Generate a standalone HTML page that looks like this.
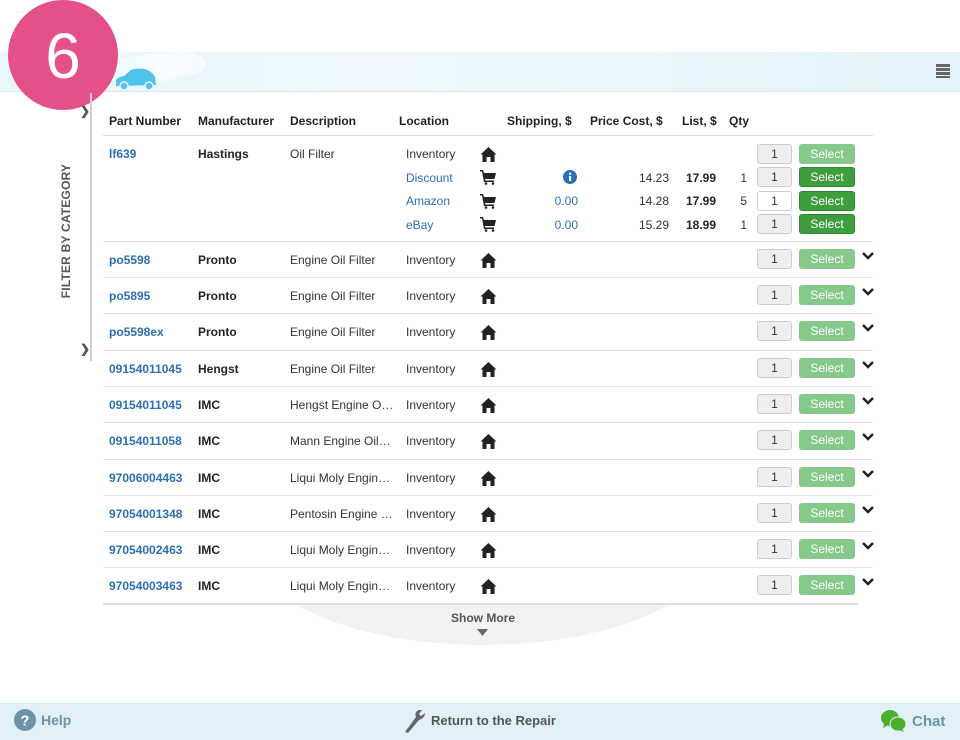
<!DOCTYPE html>
<html><head><meta charset="utf-8"><style>
*{margin:0;padding:0;box-sizing:border-box}
body{width:960px;height:740px;position:relative;overflow:hidden;background:#fff;font-family:"Liberation Sans",Arial,sans-serif;font-size:12px;color:#333}
.abs{position:absolute}
.hdr{left:0;top:52px;width:960px;height:40px;background:linear-gradient(90deg,#eaf6fc,#eef8fd 40%,#e4f3fa);border-bottom:1px solid #d8e6ee}
.circle{left:8px;top:0;width:110px;height:110px;border-radius:50%;background:#e4508a;color:#fff;font-size:64px;text-align:center;line-height:112px}
.th{top:114px;font-weight:bold;font-size:12px;color:#222}
.hline{left:103px;width:770px;top:135px;height:1px;background:#ddd}
.row{position:absolute;left:103px;width:770px;height:36px;border-top:1px solid #e3e3e3}
.row div,.r1 div,.row svg,.r1 svg{position:absolute;white-space:nowrap}
.pn{left:6px;color:#2e6fb4;font-weight:bold}
.mf{left:95px;font-weight:bold;color:#222}
.ds{left:187px;color:#333;width:104px;overflow:hidden;text-overflow:ellipsis}
.lc{left:303px}
.ic{left:377px}
.qi{left:654px;width:35px;height:20px;border:1px solid #ccc;border-radius:3px;background:#eee;text-align:center;line-height:18px;font-size:12px}
.sb{left:696px;width:56px;height:20px;border-radius:3px;background:#86c98a;color:#fff;text-align:center;line-height:20px;font-size:12px}
.sb.on{background:#3e9e3e;border:1px solid #2f8a2f;line-height:18px}
.cv{left:759px}
</style></head><body>
<div class="abs hdr"></div>
<svg class="abs" style="left:100px;top:50px" width="120" height="42"><ellipse cx="50" cy="18" rx="40" ry="14" fill="#f4fbfe"/><ellipse cx="80" cy="14" rx="26" ry="12" fill="#f6fcff"/></svg>
<svg class="abs" style="left:114px;top:68px" width="44" height="22"><path d="M2 18 L2 12 Q4 9 10 8 L17 2 Q22 0 30 1 Q37 2 41 9 L42 17 Z" fill="#4fc3ee"/><circle cx="10" cy="18" r="4" fill="#4fc3ee" stroke="#eaf6fc" stroke-width="1.5"/><circle cx="35" cy="18" r="4" fill="#4fc3ee" stroke="#eaf6fc" stroke-width="1.5"/></svg>
<div class="abs circle">6</div>
<svg class="abs" style="left:936px;top:64px" width="14" height="14"><rect x="0" y="0" width="14" height="3" fill="#666"/><rect x="0" y="4" width="14" height="3" fill="#666"/><rect x="0" y="8" width="14" height="3" fill="#666"/><rect x="0" y="12" width="14" height="2" fill="#666"/></svg>
<div class="abs" style="left:90px;top:93px;width:2px;height:268px;background:#d0d0d0"></div>
<div class="abs" style="left:80px;top:104px;color:#555;font-size:12px;font-weight:bold">&#10095;</div>
<div class="abs" style="left:80px;top:342px;color:#555;font-size:12px;font-weight:bold">&#10095;</div>
<div class="abs" style="left:-6px;top:224px;width:144px;transform:rotate(-90deg);text-align:center;color:#555;font-weight:bold;font-size:12px;letter-spacing:.2px">FILTER BY CATEGORY</div>
<div class="abs" style="left:255px;top:455px;width:455px;height:190px;border-radius:50%;background:#f2f2f2;clip-path:inset(150px 0 0 0)"></div>
<div class="abs th" style="left:109px">Part Number</div>
<div class="abs th" style="left:198px">Manufacturer</div>
<div class="abs th" style="left:290px">Description</div>
<div class="abs th" style="left:399px">Location</div>
<div class="abs th" style="left:507px">Shipping, $</div>
<div class="abs th" style="left:590px">Price Cost, $</div>
<div class="abs th" style="left:682px">List, $</div>
<div class="abs th" style="left:729px">Qty</div>
<div class="abs hline"></div>
<div class="abs r1" style="left:103px;top:136px;width:770px;height:105px">
<div class="pn" style="top:11px">lf639</div>
<div class="mf" style="top:11px">Hastings</div>
<div class="ds" style="top:11px">Oil Filter</div>
<div class="lc" style="top:11px">Inventory</div>
<div class="lc" style="top:35px;color:#2e6fb4">Discount</div>
<div class="lc" style="top:58px;color:#2e6fb4">Amazon</div>
<div class="lc" style="top:82px;color:#2e6fb4">eBay</div>
<svg class="ic" style="top:10px" width="17" height="16" viewBox="0 0 17 16"><path d="M8.5 1 L0.5 8.5 L2.5 8.5 L2.5 16 L6.5 16 L6.5 11 L10.5 11 L10.5 16 L14.5 16 L14.5 8.5 L16.5 8.5 Z" fill="#222"/></svg>
<svg class="ic" style="top:33px" width="16" height="16" viewBox="0 0 16 16"><path d="M0 1 H3 L4 4 H16 L14.5 10 H5 L5.3 11.5 H14 V13 H4 L2 2.5 H0Z" fill="#222"/><circle cx="6" cy="14.5" r="1.3" fill="#222"/><circle cx="13" cy="14.5" r="1.3" fill="#222"/></svg>
<svg class="ic" style="top:57px" width="16" height="16" viewBox="0 0 16 16"><path d="M0 1 H3 L4 4 H16 L14.5 10 H5 L5.3 11.5 H14 V13 H4 L2 2.5 H0Z" fill="#222"/><circle cx="6" cy="14.5" r="1.3" fill="#222"/><circle cx="13" cy="14.5" r="1.3" fill="#222"/></svg>
<svg class="ic" style="top:80px" width="16" height="16" viewBox="0 0 16 16"><path d="M0 1 H3 L4 4 H16 L14.5 10 H5 L5.3 11.5 H14 V13 H4 L2 2.5 H0Z" fill="#222"/><circle cx="6" cy="14.5" r="1.3" fill="#222"/><circle cx="13" cy="14.5" r="1.3" fill="#222"/></svg>
<svg style="left:460px;top:34px" width="14" height="14"><circle cx="7" cy="7" r="7" fill="#2e6fb4"/><rect x="6" y="6" width="2.2" height="5" fill="#fff"/><circle cx="7.1" cy="3.8" r="1.2" fill="#fff"/></svg>
<div style="top:58px;right:295px;color:#2e6fb4">0.00</div>
<div style="top:82px;right:295px;color:#2e6fb4">0.00</div>
<div style="top:35px;right:204px">14.23</div><div style="top:58px;right:204px">14.28</div><div style="top:82px;right:204px">15.29</div>
<div style="top:35px;right:157px;font-weight:bold;color:#222">17.99</div><div style="top:58px;right:157px;font-weight:bold;color:#222">17.99</div><div style="top:82px;right:157px;font-weight:bold;color:#222">18.99</div>
<div style="top:35px;right:126px">1</div><div style="top:58px;right:126px">5</div><div style="top:82px;right:126px">1</div>
<div class="qi" style="top:8px">1</div><div class="sb" style="top:8px">Select</div>
<div class="qi" style="top:31px">1</div><div class="sb on" style="top:31px">Select</div>
<div class="qi" style="top:55px;background:#fff">1</div><div class="sb on" style="top:55px">Select</div>
<div class="qi" style="top:78px">1</div><div class="sb on" style="top:78px">Select</div>
</div>
<div id="rows"></div>
<script>
var d=[["241","po5598","Pronto","Engine Oil Filter"],["277","po5895","Pronto","Engine Oil Filter"],["313","po5598ex","Pronto","Engine Oil Filter"],["350","09154011045","Hengst","Engine Oil Filter"],["386","09154011045","IMC","Hengst Engine Oil Filter"],["422","09154011058","IMC","Mann Engine Oil Filter"],["459","97006004463","IMC","Liqui Moly Engine Oil"],["495","97054001348","IMC","Pentosin Engine Oil"],["531","97054002463","IMC","Liqui Moly Engine Oil"],["567","97054003463","IMC","Liqui Moly Engine Oil"]];
var h="";d.forEach(function(r){h+='<div class="row" style="top:'+r[0]+'px"><div class="pn" style="top:11px">'+r[1]+'</div><div class="mf" style="top:11px">'+r[2]+'</div><div class="ds" style="top:11px">'+r[3]+'</div><div class="lc" style="top:11px">Inventory</div><svg class="ic" style="top:10px" width="17" height="16" viewBox="0 0 17 16"><path d="M8.5 1 L0.5 8.5 L2.5 8.5 L2.5 16 L6.5 16 L6.5 11 L10.5 11 L10.5 16 L14.5 16 L14.5 8.5 L16.5 8.5 Z" fill="#222"/></svg><div class="qi" style="top:7px">1</div><div class="sb" style="top:7px">Select</div><svg class="cv" style="top:9px" width="12" height="10"><path d="M1 2 L6 7 L11 2" stroke="#222" stroke-width="2.5" fill="none"/></svg></div>';});
document.getElementById("rows").innerHTML=h;
</script>
<div class="abs" style="left:103px;top:603px;width:755px;height:2px;background:#ddd"></div>
<div class="abs" style="left:451px;top:611px;font-weight:bold;color:#555;font-size:12px">Show More</div>
<svg class="abs" style="left:477px;top:629px" width="11" height="8"><path d="M0 0 H11 L5.5 7Z" fill="#666"/></svg>
<div class="abs" style="left:0;top:703px;width:960px;height:37px;background:#e2f1f8;border-top:1px solid #d5e7ef"></div>
<svg class="abs" style="left:14px;top:709px" width="22" height="22"><circle cx="11" cy="11" r="11" fill="#6a93aa"/><text x="11" y="16.5" text-anchor="middle" font-family="Liberation Sans" font-weight="bold" font-size="15" fill="#fff">?</text></svg>
<div class="abs" style="left:41px;top:712px;font-weight:bold;color:#6a93aa;font-size:14px">Help</div>
<svg class="abs" style="left:402px;top:708px" width="26" height="26" viewBox="0 0 26 26"><path d="M3 24 L14 9 Q12 4 17 2 L20 2 L17 6 L19 8 L23 5 Q23 10 17 12 L6 25 Z" fill="#666"/></svg>
<div class="abs" style="left:431px;top:713px;font-weight:bold;color:#555;font-size:13px">Return to the Repair</div>
<svg class="abs" style="left:880px;top:709px" width="28" height="24"><ellipse cx="10" cy="9" rx="9" ry="8" fill="#4caf2a"/><ellipse cx="18" cy="15" rx="8" ry="7" fill="#4caf2a" stroke="#e2f1f8" stroke-width="1"/><path d="M4 15 L3 19 L8 16Z" fill="#4caf2a"/><path d="M22 20 L24 23 L19 21Z" fill="#4caf2a"/></svg>
<div class="abs" style="left:912px;top:713px;font-weight:bold;color:#6a93aa;font-size:15px">Chat</div>
</body></html>
